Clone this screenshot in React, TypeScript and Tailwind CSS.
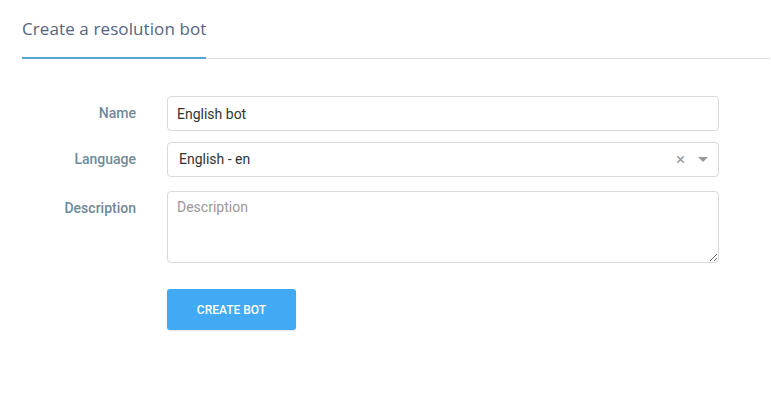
import React from "react";

export default function App() {
  return (
    <div className="w-[771px] h-[407px] bg-white" style={{ fontFamily: "Roboto, sans-serif" }}>
      <div className="pl-[22px] pr-[1px] pt-[17px]">
        <div className="flex border-b border-[#dcdcdc]">
          <div className="relative pb-[16px]">
            <span className="text-[17px] leading-[24px] text-[#55657f] tracking-[0.1px]" style={{ fontFamily: "'Open Sans', sans-serif" }}>
              Create a resolution bot
            </span>
            <div className="absolute left-0 right-0 bottom-[-1px] h-[2px] bg-[#5aa4d0]" />
          </div>
        </div>
      </div>
      <div className="pl-[22px] pt-[37px] flex flex-col">
        <div className="flex items-center">
          <label className="w-[114px] text-right text-[14px] font-medium text-[#6f8a9b]">Name</label>
          <input
            className="ml-[31px] w-[552px] h-[35px] border border-[#d9d9d9] rounded-[4px] px-[9px] text-[14px] text-[#333] outline-none"
            defaultValue="English bot"
          />
        </div>
        <div className="flex items-center mt-[11px]">
          <label className="w-[114px] text-right text-[14px] font-medium text-[#6f8a9b]">Language</label>
          <div className="ml-[31px] w-[552px] h-[35px] border border-[#d9d9d9] rounded-[4px] pl-[11px] pr-[10px] flex items-center text-[14px] text-[#333]">
            <span className="flex-1">English - en</span>
            <span className="text-[#999] text-[17px] leading-none mr-[13px]">×</span>
            <svg width="10" height="6" viewBox="0 0 10 6"><path d="M0 0 L10 0 L5 5 Z" fill="#999" /></svg>
          </div>
        </div>
        <div className="flex items-start mt-[14px]">
          <label className="w-[114px] text-right text-[14px] font-medium text-[#6f8a9b] pt-[7px]">Description</label>
          <textarea
            className="ml-[31px] w-[552px] h-[72px] border border-[#d9d9d9] rounded-[4px] px-[9px] py-[5px] text-[14px] text-[#333] placeholder:text-[#999] outline-none"
            placeholder="Description"
          />
        </div>
        <div className="mt-[26px] ml-[145px]">
          <button className="w-[129px] h-[41px] rounded-[3px] bg-[#42aaf5] text-white text-[12px] font-medium shadow-[0_1px_2px_rgba(0,0,0,0.12)]">
            CREATE BOT
          </button>
        </div>
      </div>
    </div>
  );
}
